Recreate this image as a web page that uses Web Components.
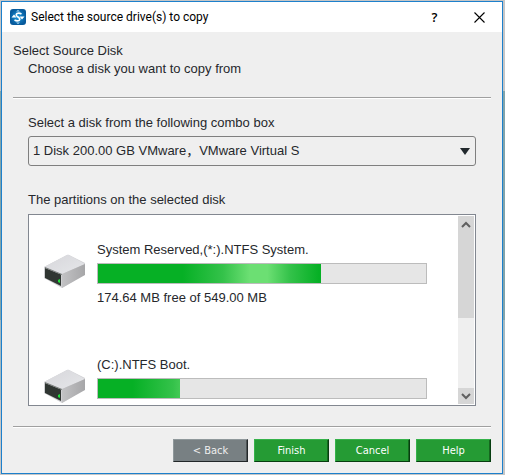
<!DOCTYPE html>
<html lang="en">
<head>
<meta charset="utf-8">
<title>Select the source drive(s) to copy</title>
<style>
  html {
    height: 100%;
    background: linear-gradient(#c6c6c6 91px, #82a4aa 91px 320px, #a5b9c0 320px 400px, #c6c6c6 400px);
  }

  body {
    box-sizing: border-box;
    height: 100%;
    margin: 0;
    padding: 1px 2px 1px 1px;
    font: 13px/18px "Liberation Sans", "Noto Sans CJK SC", sans-serif;
    color: #26282c;
  }
</style>
</head>
<body>
<wizard-window caption="Select the source drive(s) to copy">
  <wizard-header>
    <span slot="title">Select Source Disk</span>
    <span slot="subtitle">Choose a disk you want to copy from</span>
  </wizard-header>
  <disk-combo label="Select a disk from the following combo box" value="1 Disk 200.00 GB VMware，VMware Virtual S"></disk-combo>
  <partition-list label="The partitions on the selected disk">
    <partition-item used="68">
      System Reserved,(*:).NTFS System.
      <span slot="detail">174.64 MB free of 549.00 MB</span>
    </partition-item>
    <partition-item used="25">
      (C:).NTFS Boot.
    </partition-item>
  </partition-list>
  <wizard-button slot="actions" muted>&lt; Back</wizard-button>
  <wizard-button slot="actions">Finish</wizard-button>
  <wizard-button slot="actions">Cancel</wizard-button>
  <wizard-button slot="actions">Help</wizard-button>
</wizard-window>

<script>
class WizardWindow extends HTMLElement {
  constructor() {
    super();
    this.attachShadow({ mode: "open" });
  }

  static get styles() {
    return /* css */`
      :host {
        box-sizing: border-box;
        display: flex;
        flex-direction: column;
        height: 100%;
        border: 1px solid #1d80cc;
        background: #efefef;
      }

      header {
        display: flex;
        align-items: center;
        height: 30px;
        padding-left: 8px;
        background: #fff;
        color: #000;
      }

      h1 {
        flex: 1;
        margin: 0 0 0 5px;
        font: 12px/18px Roboto, sans-serif;
      }

      header button {
        display: grid;
        place-items: center;
        width: 45px;
        height: 28px;
        padding: 0;
        border: 0;
        background: none;
        font: 600 13px/18px "Open Sans", sans-serif;
        color: #000;
      }

      main {
        flex: 1;
        display: flex;
        flex-direction: column;
        min-height: 0;
        padding: 0 11px;
      }

      footer {
        display: flex;
        justify-content: flex-end;
        gap: 6px;
        margin: 0 11px;
        padding: 12px 0 11px;
        border-top: 1px solid #a0a0a0;
        box-shadow: inset 0 1px #fff;
      }
    `;
  }

  connectedCallback() {
    this.render();
  }

  render() {
    this.shadowRoot.innerHTML = /* html */`
    <style>${WizardWindow.styles}</style>
    <header>
      <svg width="16" height="16" viewBox="0 0 16 16" aria-hidden="true">
        <defs>
          <radialGradient id="logo"><stop stop-color="#1b9ae0"/><stop offset="1" stop-color="#075a9c"/></radialGradient>
        </defs>
        <rect width="16" height="16" rx="3" fill="url(#logo)"/>
        <path d="M8 1l2 1.500H6zM8 15l2-1.500H6z" fill="#b5dcf3"/>
        <path d="M11.500 5Q9 3.500 7 4.500Q5 6 8 8Q11 10 9 11.500Q7 12.500 4.500 11" fill="none" stroke="#fff" stroke-width="1.600"/>
        <path d="M1.500 8.500L4 5.500L6.500 8.500zM14.500 7.500L12 10.500L9.500 7.500z" fill="#fff"/>
      </svg>
      <h1>${this.getAttribute("caption")}</h1>
      <button type="button">?</button>
      <button type="button" aria-label="Close">
        <svg width="11" height="11" viewBox="0 0 11 11"><path d="M.5.500l10 10M10.500.500l-10 10" stroke="#000" stroke-width="1.100"/></svg>
      </button>
    </header>
    <main><slot></slot></main>
    <footer><slot name="actions"></slot></footer>`;
  }
}

class WizardHeader extends HTMLElement {
  constructor() {
    super();
    this.attachShadow({ mode: "open" });
  }

  static get styles() {
    return /* css */`
      :host {
        display: block;
        padding: 10px 0 19px;
        border-bottom: 1px solid #a0a0a0;
        box-shadow: 0 1px #fff;
      }

      h2, p {
        margin: 0;
        font: inherit;
      }

      p {
        padding-left: 15px;
      }
    `;
  }

  connectedCallback() {
    this.render();
  }

  render() {
    this.shadowRoot.innerHTML = /* html */`
    <style>${WizardHeader.styles}</style>
    <h2><slot name="title"></slot></h2>
    <p><slot name="subtitle"></slot></p>`;
  }
}

class DiskCombo extends HTMLElement {
  constructor() {
    super();
    this.attachShadow({ mode: "open" });
  }

  static get styles() {
    return /* css */`
      :host {
        display: block;
        margin: 16px 15px 0;
      }

      label {
        display: block;
        margin-bottom: 4px;
      }

      .field {
        display: grid;
        align-items: center;
      }

      select, svg {
        grid-area: 1 / 1;
      }

      select {
        appearance: none;
        width: 100%;
        height: 30px;
        padding: 0 24px 0 4px;
        border: 1px solid #7f7f7f;
        border-radius: 3px;
        background: #efefef;
        font: inherit;
        color: inherit;
      }

      svg {
        justify-self: end;
        margin-right: 6px;
        pointer-events: none;
      }
    `;
  }

  connectedCallback() {
    this.render();
  }

  render() {
    this.shadowRoot.innerHTML = /* html */`
    <style>${DiskCombo.styles}</style>
    <label for="disk">${this.getAttribute("label")}</label>
    <div class="field">
      <select id="disk"><option>${this.getAttribute("value")}</option></select>
      <svg width="10" height="7" viewBox="0 0 10 7" aria-hidden="true"><path d="M0 0h10L5 7z" fill="#22292d"/></svg>
    </div>`;
  }
}

class PartitionList extends HTMLElement {
  constructor() {
    super();
    this.attachShadow({ mode: "open" });
  }

  static get styles() {
    return /* css */`
      :host {
        flex: 1;
        display: flex;
        flex-direction: column;
        gap: 5px;
        min-height: 0;
        margin: 25px 15px 20px;
      }

      .frame {
        flex: 1;
        display: flex;
        min-height: 0;
        padding: 1px;
        border: 1px solid #828790;
        background: #fff;
      }

      .items {
        flex: 1;
        overflow: hidden;
        padding-top: 25px;
      }

      .scrollbar {
        display: flex;
        flex-direction: column;
        width: 16px;
        background: #efefef;
      }

      .scrollbar button {
        display: grid;
        place-items: center;
        height: 16px;
        padding: 0;
        border: 0;
        background: #d6d6d6;
      }

      .track {
        flex: 1;
      }

      .thumb {
        height: 55%;
        background: #d6d6d6;
      }

      path {
        fill: none;
        stroke: #606060;
        stroke-width: 2;
      }
    `;
  }

  connectedCallback() {
    this.render();
  }

  render() {
    this.shadowRoot.innerHTML = /* html */`
    <style>${PartitionList.styles}</style>
    <div id="caption">${this.getAttribute("label")}</div>
    <div class="frame">
      <div class="items" role="list" aria-labelledby="caption"><slot></slot></div>
      <div class="scrollbar">
        <button type="button" aria-label="Scroll up"><svg width="10" height="7" viewBox="0 0 10 7"><path d="M1 6l4-4 4 4"/></svg></button>
        <div class="track"><div class="thumb"></div></div>
        <button type="button" aria-label="Scroll down"><svg width="10" height="7" viewBox="0 0 10 7"><path d="M1 1l4 4 4-4"/></svg></button>
      </div>
    </div>`;
  }
}

class PartitionItem extends HTMLElement {
  constructor() {
    super();
    this.attachShadow({ mode: "open" });
  }

  static get styles() {
    return /* css */`
      :host {
        display: flex;
        gap: 11px;
        height: 66px;
        margin-bottom: 49px;
        padding: 0 31px 0 14px;
      }

      svg {
        margin-top: 13px;
      }

      .info {
        flex: 1;
      }

      .bar {
        box-sizing: border-box;
        height: 21px;
        margin: 4px 0 5px;
        border: 1px solid #bcbcbc;
        background: #e6e6e6;
      }

      .fill {
        height: 100%;
        overflow: hidden;
        background: #06b025;
      }

      /* the travelling highlight, cut off where the fill ends */
      .shine {
        width: 223px;
        height: 100%;
        background: linear-gradient(90deg, #06b025 38%, #34c24a 56%, #6cdf73 68% 76%, #34c24a 86%, #06b025 99%);
      }
    `;
  }

  connectedCallback() {
    this.render();
  }

  get used() { return Number(this.getAttribute("used")); }

  render() {
    const start = this.used > 50 ? 0 : -50;
    this.shadowRoot.innerHTML = /* html */`
    <style>${PartitionItem.styles}</style>
    <svg width="42" height="34" viewBox="0 0 42 34" aria-hidden="true">
      <defs>
        <linearGradient id="top" x2="1" y2="1"><stop stop-color="#d6d6da"/><stop offset="1" stop-color="#e6e7ea"/></linearGradient>
        <linearGradient id="side"><stop stop-color="#c2c2c4"/><stop offset="1" stop-color="#a6a6a8"/></linearGradient>
      </defs>
      <path d="M0 13L23 1Q24 .5 25 1L41 9V20L18 34L0 24z" fill="#d0d0d3"/>
      <path d="M0 13L23 1Q24 .5 25 1L41 10L18 20z" fill="url(#top)"/>
      <path d="M18 20L41 10V21L18 34z" fill="url(#side)"/>
      <path d="M1 14L17 20.500V32L1 24z" fill="#303632"/>
      <path d="M1 13L18 20V21L1 14z" fill="#777b79"/>
      <path d="M14 26l2-1v4l-2-1z" fill="#21df3c"/>
    </svg>
    <div class="info">
      <div id="name"><slot></slot></div>
      <div class="bar" role="progressbar" aria-labelledby="name" aria-valuenow="${this.used}">
        <div class="fill" style="width: ${this.used}%"><div class="shine" style="margin-left: ${start}px"></div></div>
      </div>
      <div><slot name="detail"></slot></div>
    </div>`;
  }
}

class WizardButton extends HTMLElement {
  constructor() {
    super();
    this.attachShadow({ mode: "open" });
  }

  static get styles() {
    return /* css */`
      :host {
        display: block;
      }

      button {
        display: block;
        width: 75px;
        height: 23px;
        padding: 0;
        border: 1px solid;
        border-color: #35b24a #073d10 #073d10 #35b24a;
        box-shadow: inset -1px 0 #15671f;
        background: #259b34;
        font: 11px/16px "DejaVu Sans Condensed", "Noto Sans", sans-serif;
        color: #fff;
      }

      :host([muted]) button {
        border-color: #8f989b #222729 #222729 #8f989b;
        box-shadow: inset -1px 0 #4d5355;
        background: #788083;
        color: #eee;
      }
    `;
  }

  connectedCallback() {
    this.render();
  }

  render() {
    this.shadowRoot.innerHTML = /* html */`
    <style>${WizardButton.styles}</style>
    <button type="button"><slot></slot></button>`;
  }
}

customElements.define("wizard-window", WizardWindow);
customElements.define("wizard-header", WizardHeader);
customElements.define("disk-combo", DiskCombo);
customElements.define("partition-list", PartitionList);
customElements.define("partition-item", PartitionItem);
customElements.define("wizard-button", WizardButton);
</script>
</body>
</html>
